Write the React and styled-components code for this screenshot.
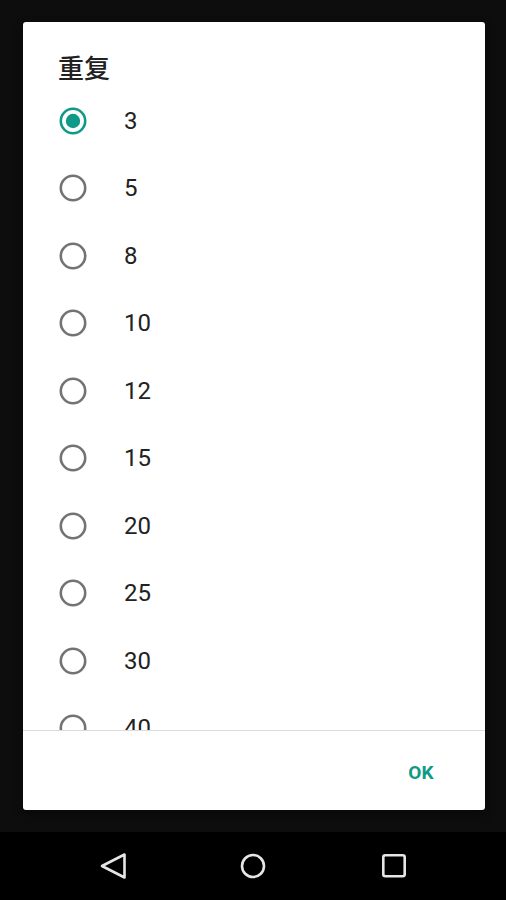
import React from "react";
import styled, { createGlobalStyle } from "styled-components";

const Global = createGlobalStyle`
  html, body { margin: 0; padding: 0; background: #0d0d0d; }
  body { font-family: Roboto, "Noto Sans", "Noto Sans CJK SC", sans-serif; }
  * { box-sizing: border-box; }
`;

const Screen = styled.div`
  width: 506px;
  height: 900px;
  display: flex;
  flex-direction: column;
  background: #0d0d0d;
`;

const Main = styled.div`
  flex: 1;
  padding: 22px 21px 22px 23px;
  display: flex;
  flex-direction: column;
`;

const Dialog = styled.div`
  height: 788px;
  background: #ffffff;
  border-radius: 3px;
  display: flex;
  flex-direction: column;
  overflow: hidden;
  box-shadow: 0 4px 10px rgba(0, 0, 0, 0.4);
`;

const Title = styled.div`
  padding: 27px 35px 0;
  height: 65px;
  font-family: "Noto Sans CJK SC", "Noto Sans", sans-serif;
  font-size: 26px;
  font-weight: 500;
  line-height: 36px;
  color: #212121;
`;

const List = styled.div`
  flex: 1;
  overflow: hidden;
  display: flex;
  flex-direction: column;
`;

const Row = styled.div`
  flex: 0 0 67.5px;
  height: 67.5px;
  display: flex;
  align-items: center;
  padding-left: 36px;
`;

const Label = styled.span`
  margin-left: 37px;
  font-family: Roboto, sans-serif;
  font-size: 24px;
  color: #222222;
  line-height: 1;
`;

const Footer = styled.div`
  flex: 0 0 80px;
  border-top: 1px solid #dcdcdc;
  display: flex;
  align-items: center;
  justify-content: flex-end;
  padding-right: 51px;
`;

const Button = styled.span`
  font-family: Roboto, sans-serif;
  font-weight: 700;
  font-size: 19px;
  color: #0f9a88;
  letter-spacing: 0.3px;
  margin-top: 4px;
`;

const NavBar = styled.div`
  flex: 0 0 68px;
  background: #000;
  display: flex;
  align-items: center;
  justify-content: center;
  gap: 112.5px;
`;

const Radio = ({ checked }) => (
  <svg width="28" height="28" viewBox="0 0 28 28">
    <circle
      cx="14"
      cy="14"
      r="12.2"
      fill="none"
      stroke={checked ? "#0f9a88" : "#737373"}
      strokeWidth="2.6"
    />
    {checked && <circle cx="14" cy="14" r="7.2" fill="#0f9a88" />}
  </svg>
);

const values = [3, 5, 8, 10, 12, 15, 20, 25, 30, 40];

export default function App() {
  return (
    <Screen>
      <Global />
      <Main>
        <Dialog>
          <Title>重复</Title>
          <List>
            {values.map((v, i) => (
              <Row key={v}>
                <Radio checked={i === 0} />
                <Label>{v}</Label>
              </Row>
            ))}
          </List>
          <Footer>
            <Button>OK</Button>
          </Footer>
        </Dialog>
      </Main>
      <NavBar>
        <svg width="28" height="28" viewBox="0 0 28 28">
          <path
            d="M3 14 L25.5 2.5 L25.5 25.5 Z"
            fill="none"
            stroke="#e6e6e6"
            strokeWidth="2.6"
            strokeLinejoin="round"
          />
        </svg>
        <svg width="28" height="28" viewBox="0 0 28 28">
          <circle cx="14" cy="14" r="11" fill="none" stroke="#e6e6e6" strokeWidth="2.6" />
        </svg>
        <svg width="28" height="28" viewBox="0 0 28 28">
          <rect x="3.3" y="3.3" width="21.4" height="21" rx="2" fill="none" stroke="#e6e6e6" strokeWidth="2.6" />
        </svg>
      </NavBar>
    </Screen>
  );
}
